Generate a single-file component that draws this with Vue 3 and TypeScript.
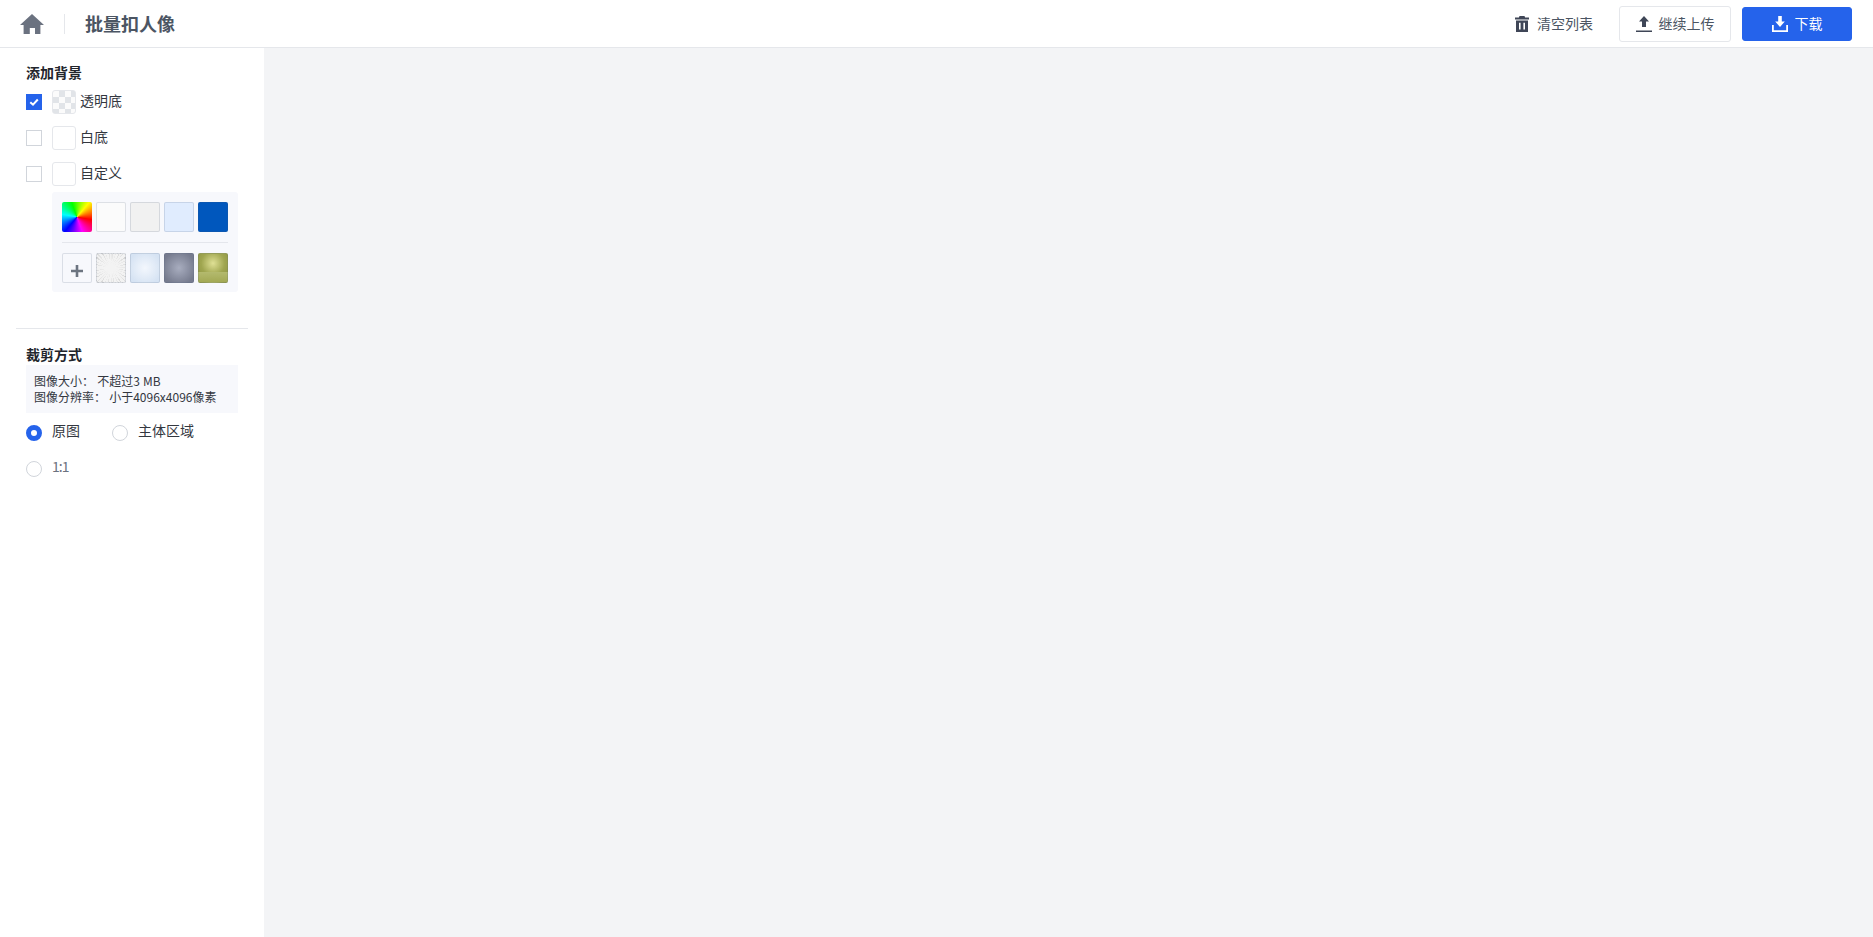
<script setup lang="ts">
const solids = ['#fbfbfb', '#f1f1f1', '#e0ecfe', '#0057bd']
</script>

<template>
  <div class="page">
    <header class="topbar">
      <div class="left">
        <svg class="home" viewBox="0 0 24 20" width="24" height="20"><path fill="#6b7280" d="M12 0 24 11h-3.600v9H15v-6H9.800v6H3.600v-9H0z"/></svg>
        <span class="vline"></span>
        <h1 class="title">批量扣人像</h1>
      </div>
      <div class="actions">
        <button class="btn ghost">
          <svg viewBox="0 0 14 16" width="14" height="16"><path fill="#3f4657" d="M4.500 0h5l.6 1.600H14v1.800H0V1.600h3.900zM1 4.600h12V16H1zm3 2.200v6.800h1.600V6.800zm4.400 0v6.800H10V6.800z"/></svg>
          <span>清空列表</span>
        </button>
        <button class="btn outline">
          <svg viewBox="0 0 16 16" width="16" height="16"><path fill="#3f4657" d="M8 0l5 5.600H10V11H6V5.600H3zM0 14.400h16V16H0z"/></svg>
          <span>继续上传</span>
        </button>
        <button class="btn primary">
          <svg viewBox="0 0 16 16" width="16" height="16"><path fill="#fff" d="M6.200 0h3.600v5.600h3L8 11 3.200 5.600h3zM0 9h1.800v5.200h12.400V9H16v7H0z"/></svg>
          <span>下载</span>
        </button>
      </div>
    </header>
    <div class="body">
      <aside class="side">
        <section class="bg">
          <h2 class="sec">添加背景</h2>
          <label class="row">
            <span class="check on"><svg viewBox="0 0 16 16" width="16" height="16"><path d="M4.300 8.200 7 10.700l4.800-5.200" fill="none" stroke="#fff" stroke-width="2"/></svg></span>
            <span class="thumb checker"></span>
            <span class="txt">透明底</span>
          </label>
          <label class="row">
            <span class="check"></span>
            <span class="thumb"></span>
            <span class="txt">白底</span>
          </label>
          <label class="row">
            <span class="check"></span>
            <span class="thumb"></span>
            <span class="txt">自定义</span>
          </label>
          <div class="panel">
            <div class="swatches">
              <span class="sw rainbow"></span>
              <span v-for="c in solids" :key="c" class="sw line" :style="{ background: c }"></span>
            </div>
            <div class="pline"></div>
            <div class="swatches">
              <span class="sw line plus">
                <svg viewBox="0 0 12 12" width="12" height="12"><path d="M4.700 0h2.600v4.700H12v2.600H7.300V12H4.700V7.300H0V4.700h4.700z" fill="#6c7480"/></svg>
              </span>
              <span class="sw line t1"></span>
              <span class="sw line t2"></span>
              <span class="sw line t3"></span>
              <span class="sw line t4"></span>
            </div>
          </div>
        </section>
        <div class="sep"></div>
        <section class="crop">
          <h2 class="sec">裁剪方式</h2>
          <div class="info">
            <div>图像大小： 不超过3 MB</div>
            <div>图像分辨率： 小于4096x4096像素</div>
          </div>
          <div class="radios">
            <label class="radio r1"><span class="dot on"></span><span class="txt up">原图</span></label>
            <label class="radio"><span class="dot"></span><span class="txt up">主体区域</span></label>
          </div>
          <div class="radios second">
            <label class="radio"><span class="dot"></span><span class="txt up gray">1:1</span></label>
          </div>
        </section>
      </aside>
      <main class="main"></main>
    </div>
  </div>
</template>

<style>
html, body { margin: 0; background: #fff; }
</style>

<style scoped>
.page {
  width: 1873px;
  height: 937px;
  display: flex;
  flex-direction: column;
  overflow: hidden;
  font-family: "Noto Sans CJK SC", "Noto Sans", sans-serif;
  color: #2b2f38;
}
.topbar {
  height: 47px;
  flex: none;
  border-bottom: 1px solid #e5e7eb;
  display: flex;
  align-items: center;
  justify-content: space-between;
  padding: 0 21px 0 20px;
  background: #fff;
}
.left { display: flex; align-items: center; }
.home { display: block; }
.vline { width: 1px; height: 20px; background: #e5e7eb; margin: 0 20px; }
.title { margin: 0 0 2px; font-size: 18px; font-weight: 700; color: #4b5563; line-height: 24px; }
.actions { display: flex; align-items: center; }
.btn {
  height: 36px;
  border-radius: 3px;
  font: inherit;
  font-size: 14px;
  display: flex;
  align-items: center;
  justify-content: center;
  gap: 7px;
  padding: 0;
  background: #fff;
  border: 1px solid transparent;
  color: #4b5563;
}
.btn span { padding-bottom: 2px; }
.btn svg { margin-top: 1px; }
.ghost { width: 78px; margin-right: 26px; gap: 8px; border: none; }
.outline { width: 112px; border-color: #e5e7eb; margin-right: 11px; }
.primary { width: 110px; height: 34px; background: #2563eb; border-color: #2563eb; color: #fff; }
.body { flex: 1; display: flex; min-height: 0; }
.side { width: 264px; flex: none; background: #fff; padding-top: 15px; box-sizing: border-box; }
.main { flex: 1; background: #f3f4f6; }
.sec { margin: 0; font-size: 14px; font-weight: 700; line-height: 18px; color: #22252c; }
.bg { padding: 0 26px; }
.row { display: flex; align-items: center; height: 36px; font-size: 14px; color: #33373f; }
.bg .sec { margin-bottom: 3px; }
.check { width: 16px; height: 16px; box-sizing: border-box; border: 1px solid #d1d5db; margin-right: 10px; }
.check.on { border: none; background: #2563eb; }
.check svg { display: block; }
.thumb { width: 24px; height: 24px; box-sizing: border-box; border: 1px solid #e5e7eb; border-radius: 3px; margin-right: 4px; background: #fff; }
.checker {
  background-color: #fbfbfb;
  background-image: conic-gradient(#e1e4e8 25%, #fbfbfb 0 50%, #e1e4e8 0 75%, #fbfbfb 0);
  background-size: 12px 12px;
}
.txt { line-height: 18px; padding-bottom: 4px; }
.txt.up { padding-bottom: 6px; }
.panel {
  margin-left: 26px;
  width: 186px;
  height: 100px;
  box-sizing: border-box;
  padding: 10px;
  background: #f7f8fc;
  border-radius: 3px;
}
.swatches { display: flex; gap: 4px; }
.sw { width: 30px; height: 30px; box-sizing: border-box; border-radius: 2px; display: flex; align-items: center; justify-content: center; }
.line { border: 1px solid rgba(70, 90, 120, 0.16); }
.rainbow { background: conic-gradient(from 100deg, #f00, #f0f, #00f, #0ff, #0f0, #ff0, #f00); }
.pline { height: 1px; background: #e4e6ec; margin: 10px 0; }
.plus { background: #f7f8fc; padding-top: 6px; }
.t1 {
  background:
    radial-gradient(circle, #f3f3f3 20%, rgba(243, 243, 243, 0.65) 65%, rgba(243, 243, 243, 0.2) 100%),
    repeating-conic-gradient(from 5deg, #c4c4c4 0 4deg, #efefef 4deg 11deg, #d4d4d4 11deg 14deg, #f2f2f2 14deg 23deg);
}
.t2 { background: radial-gradient(circle, #f3f7fd 0%, #d6e3f3 85%); }
.t3 { background: radial-gradient(circle, #a8adbf 0%, #767b8e 85%); }
.t4 {
  background:
    linear-gradient(transparent 66%, #b3b96d 66%, #a3a954 100%),
    radial-gradient(circle at 50% 33%, #dfe095 0%, #a0a650 50%, #878e3c 100%);
}
.sep { height: 1px; background: #e5e7eb; margin: 36px 16px 16px; }
.crop { padding: 0 26px; }
.crop .sec { margin-bottom: 2px; }
.info {
  width: 212px;
  height: 48px;
  box-sizing: border-box;
  padding: 8px;
  background: #f7f8fc;
  font-size: 12px;
  line-height: 16px;
  color: #33373f;
  word-spacing: 0.5px;
}
.radios { display: flex; margin-top: 12px; height: 16px; font-size: 14px; color: #33373f; }
.radios.second { margin-top: 20px; }
.radio { display: flex; align-items: center; }
.r1 { width: 86px; }
.dot { width: 16px; height: 16px; box-sizing: border-box; border: 1px solid #d1d5db; border-radius: 50%; margin-right: 10px; }
.dot.on { border: 5px solid #2563eb; background: #fff; }
.gray { color: #6b7280; letter-spacing: -1px; }
</style>
